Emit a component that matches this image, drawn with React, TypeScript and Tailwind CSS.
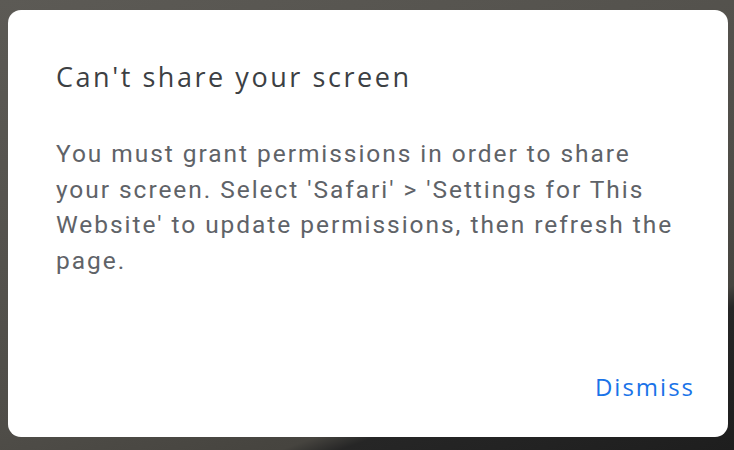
export default function App() {
  return (
    <div className="w-[734px] h-[450px] overflow-hidden bg-[linear-gradient(160deg,#5c5a55_0%,#4f4d48_60%,#46443f_77%,#262626_80%,#1e1e1e_100%)] pt-[10px] pl-[8px]">
      <div className="w-[720px] h-[427px] bg-white rounded-[13px] flex flex-col pl-[48px] pr-[33px] pt-[51px] pb-[38px]">
        <h1 className="text-[27px] leading-[32px] text-[#3c4043] font-medium font-['Open_Sans',sans-serif] tracking-[2.55px]">
          Can't share your screen
        </h1>
        <p className="mt-[43px] text-[24.5px] leading-[35.5px] text-[#5f6368] font-['Roboto',sans-serif] tracking-[1.95px] whitespace-nowrap">
          You must grant permissions in order to share
          <br />
          your screen. Select 'Safari' &gt; 'Settings for This
          <br />
          Website' to update permissions, then refresh the
          <br />
          page.
        </p>
        <div className="flex-1" />
        <div className="flex justify-end">
          <button className="text-[24px] leading-[24px] text-[#1a73e8] font-medium font-['Open_Sans',sans-serif] tracking-[2px]">
            Dismiss
          </button>
        </div>
      </div>
    </div>
  );
}
